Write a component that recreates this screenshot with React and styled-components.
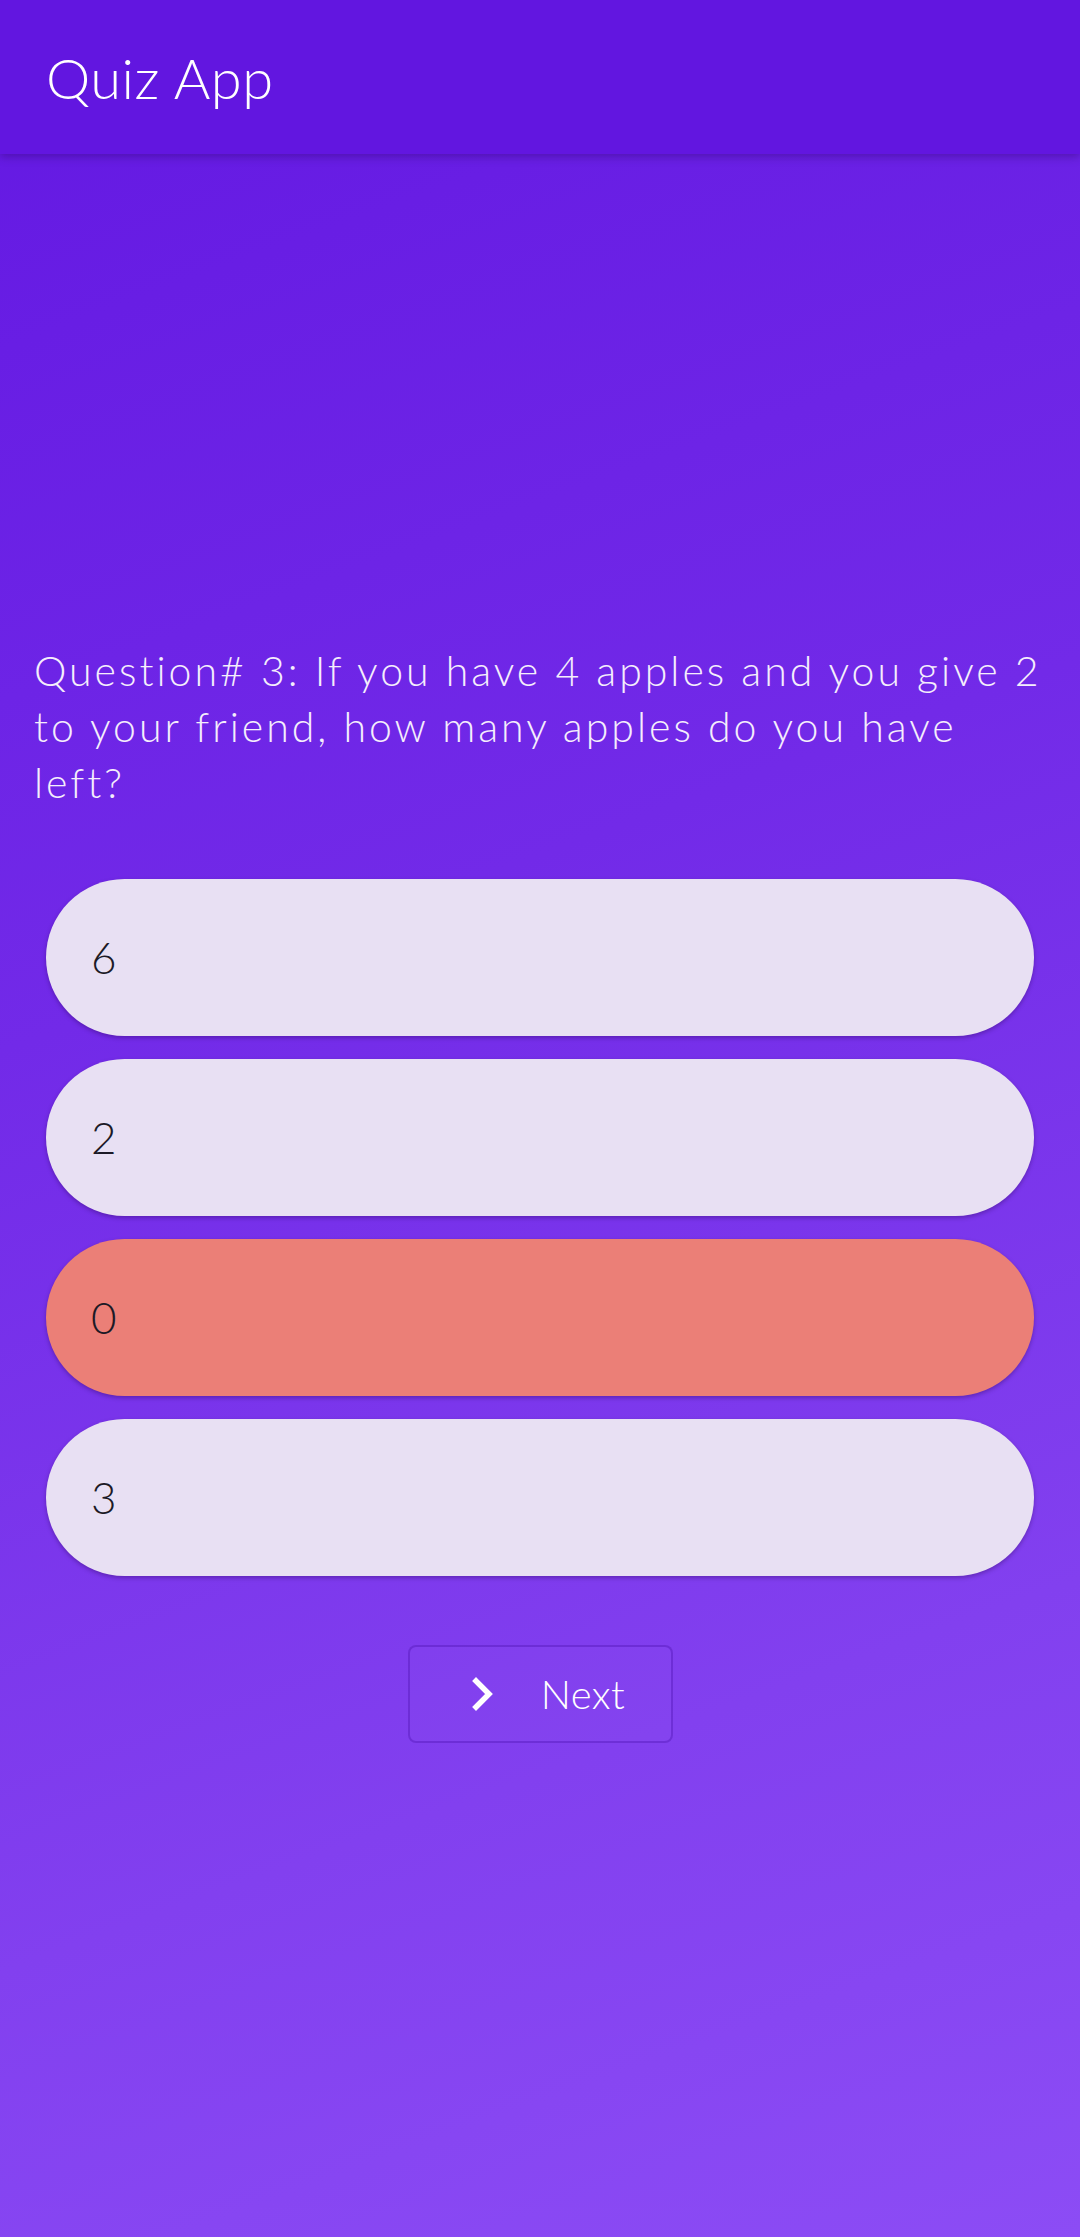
import React from 'react';
import styled, { createGlobalStyle } from 'styled-components';

const GlobalStyle = createGlobalStyle`
  html, body {
    margin: 0;
    padding: 0;
  }
  body {
    font-family: 'Lato', 'Noto Sans', sans-serif;
    font-weight: 300;
  }
`;

const Page = styled.div`
  min-height: 100vh;
  display: flex;
  flex-direction: column;
  background: linear-gradient(160deg, #6318e2 0%, #722ae8 40%, #8240ef 75%, #8c4cf5 100%);
`;

const TopBar = styled.header`
  height: 154px;
  flex-shrink: 0;
  display: flex;
  align-items: center;
  padding: 0 46px;
  background: #6216e0;
  box-shadow: 0 3px 8px rgba(40, 0, 90, 0.35);
  position: relative;
  z-index: 1;
`;

const Title = styled.h1`
  margin: 0;
  color: #fff;
  font-size: 56px;
  font-weight: 300;
  letter-spacing: 0.5px;
`;

const Body = styled.main`
  flex: 1;
  display: flex;
  flex-direction: column;
  justify-content: center;
  padding: 0 0 6px;
`;

const QuestionText = styled.p`
  margin: 0 0 68px;
  padding: 0 34px;
  color: #f5eefc;
  font-size: 41px;
  line-height: 56px;
  font-weight: 300;
  letter-spacing: 3px;
`;

const OptionList = styled.div`
  display: flex;
  flex-direction: column;
  gap: 23px;
  padding: 0 46px;
`;

const Option = styled.button`
  height: 157px;
  border: none;
  border-radius: 79px;
  padding: 0 45px;
  text-align: left;
  font-family: inherit;
  font-size: 44px;
  font-weight: 300;
  color: #1c1a26;
  background: ${(p) => (p.$wrong ? '#eb7f77' : '#e8e0f3')};
  box-shadow: 0 2px 4px rgba(40, 0, 80, 0.35);
`;

const NextButton = styled.button`
  align-self: center;
  margin-top: 69px;
  width: 265px;
  height: 98px;
  display: flex;
  align-items: center;
  justify-content: center;
  gap: 46px;
  border: 2px solid rgba(70, 10, 170, 0.35);
  border-radius: 8px;
  background: rgba(255, 255, 255, 0.02);
  color: #fff;
  font-family: inherit;
  font-size: 40px;
  font-weight: 300;
  letter-spacing: 0.5px;
  padding: 0 0 0 16px;
`;

const options = [
  { label: '6' },
  { label: '2' },
  { label: '0', wrong: true },
  { label: '3' },
];

export default function App() {
  return (
    <>
      <GlobalStyle />
      <Page>
        <TopBar>
          <Title>Quiz App</Title>
        </TopBar>
        <Body>
          <QuestionText>
            Question# 3: If you have 4 apples and you give 2 to your friend, how many apples do you have left?
          </QuestionText>
          <OptionList>
            {options.map((o) => (
              <Option key={o.label} $wrong={o.wrong}>
                {o.label}
              </Option>
            ))}
          </OptionList>
          <NextButton>
            <svg width="24" height="36" viewBox="0 0 24 36" fill="none">
              <path d="M5 5 L18 18 L5 31" stroke="#fff" strokeWidth="5.5" strokeLinecap="square" />
            </svg>
            <span>Next</span>
          </NextButton>
        </Body>
      </Page>
    </>
  );
}
